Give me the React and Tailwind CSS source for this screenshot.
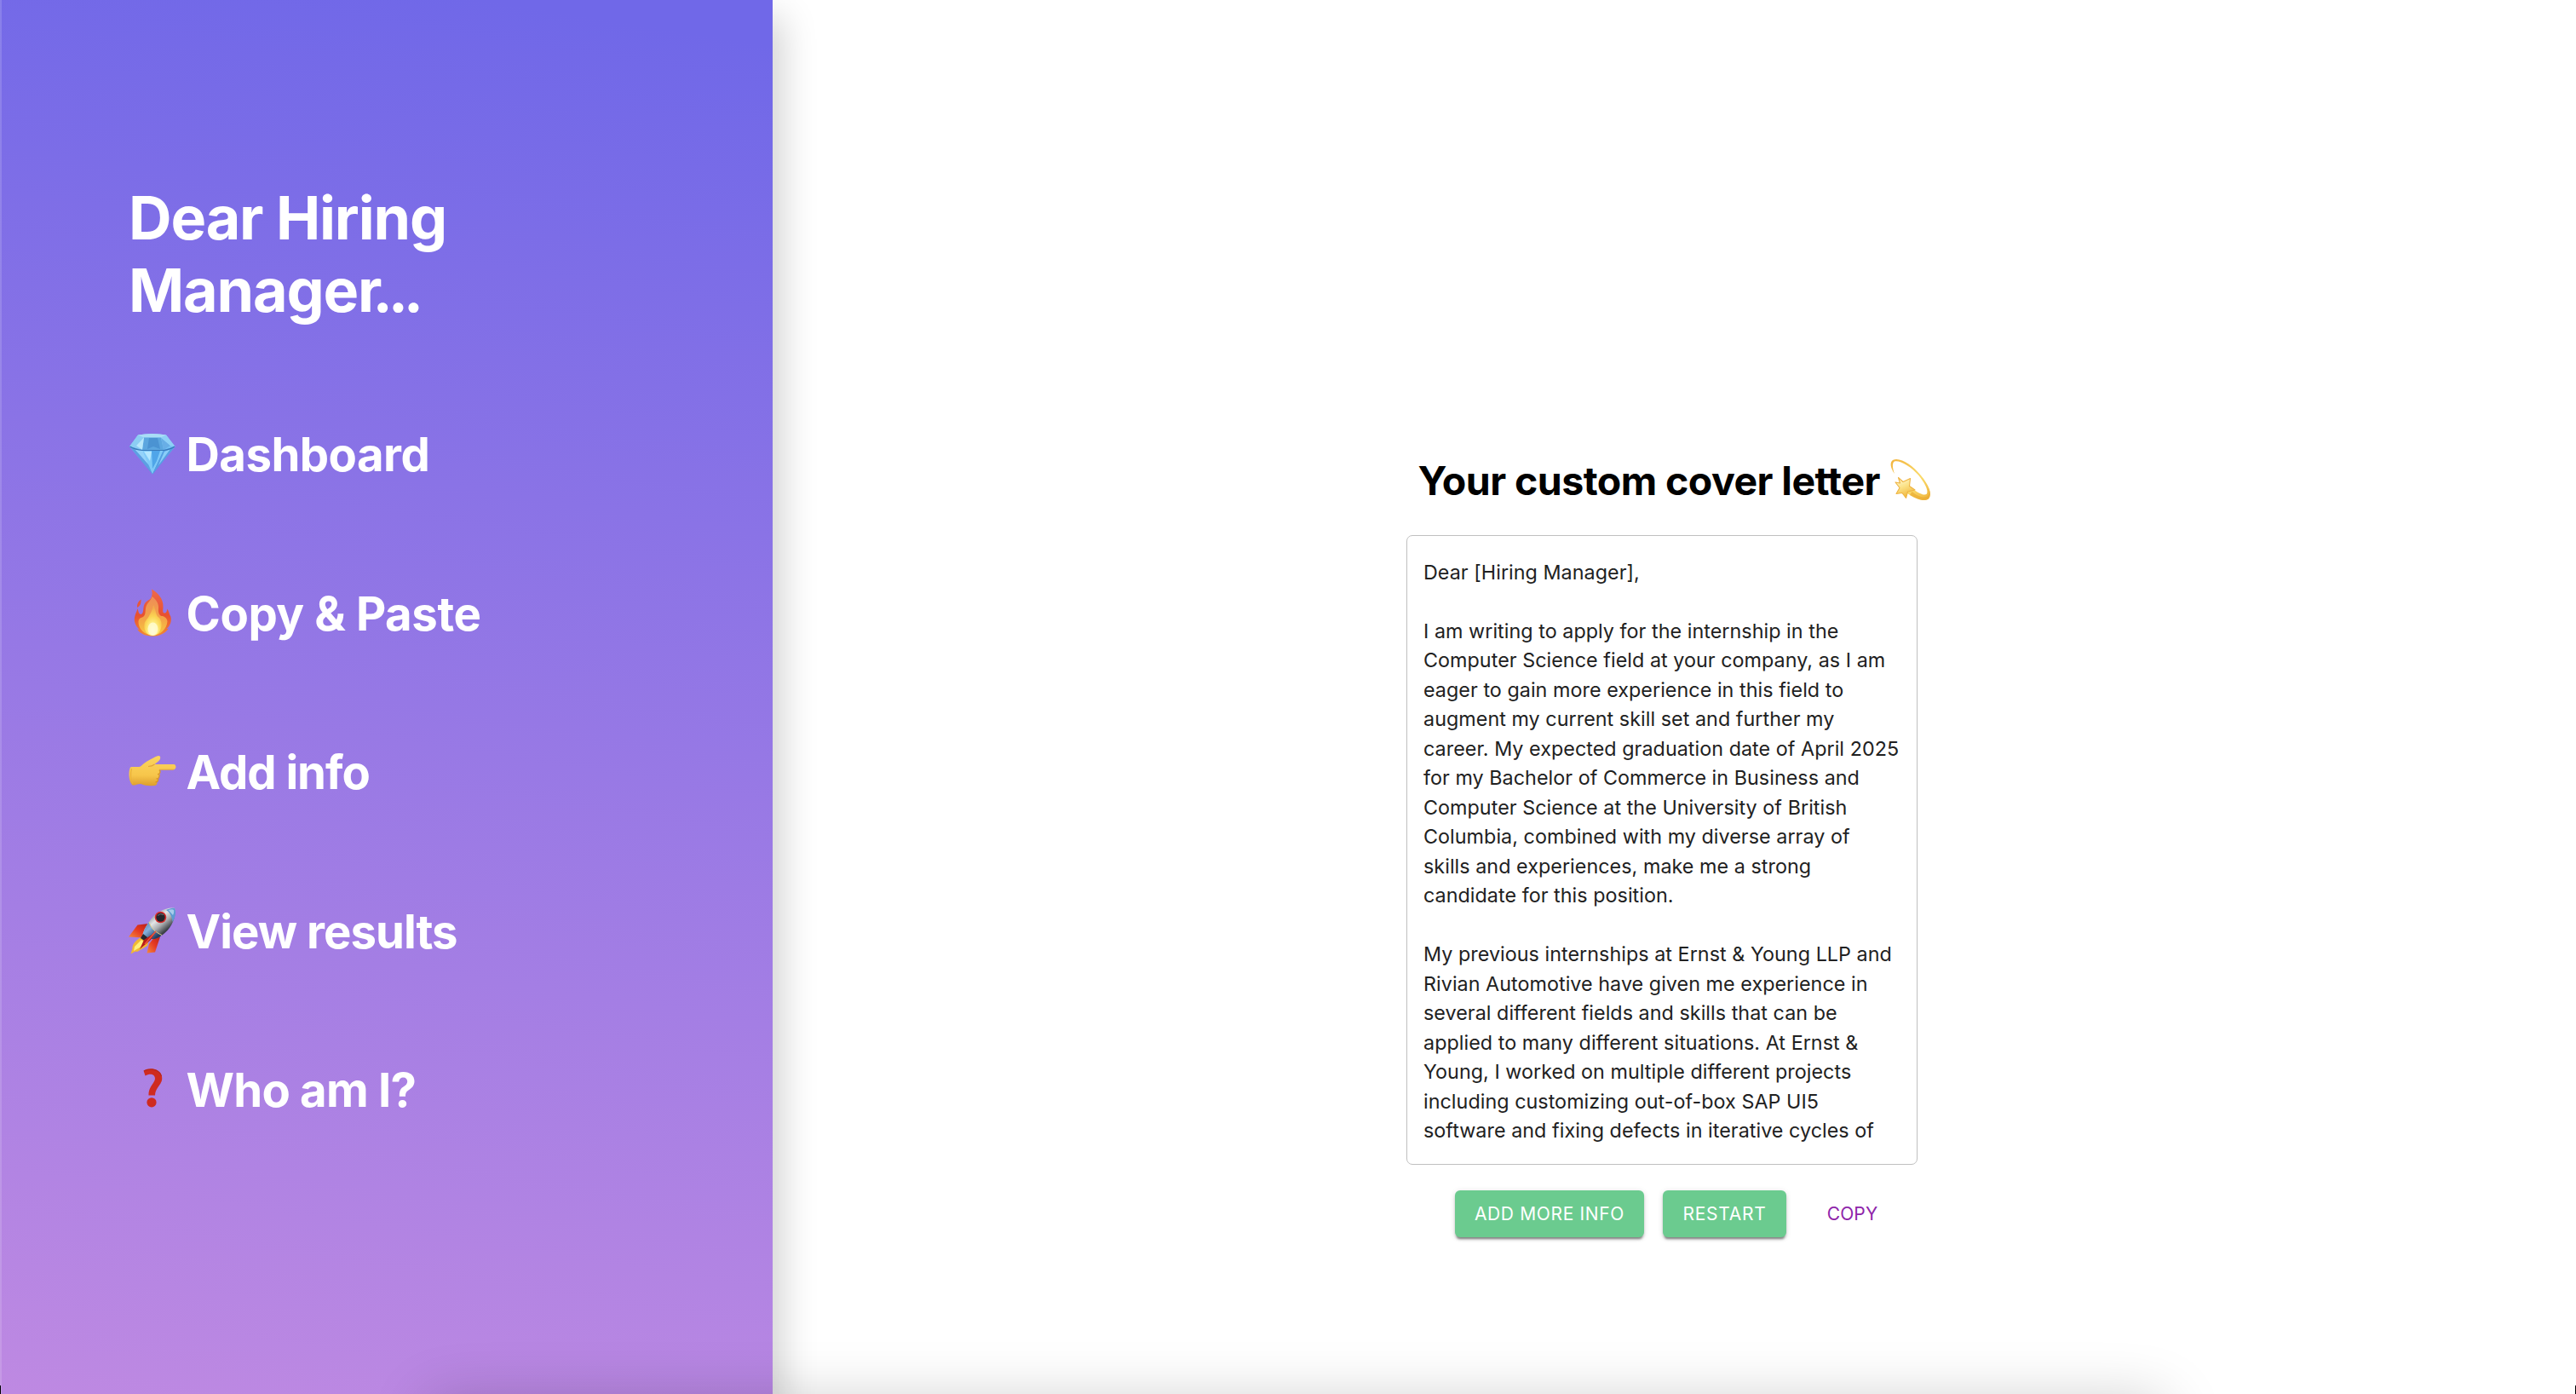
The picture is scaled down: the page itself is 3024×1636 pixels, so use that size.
function Gem() {
  return (
    <svg className="h-[66px] w-[56px] shrink-0" viewBox="0 0 56 66" aria-hidden="true">
      <defs>
        <linearGradient id="gemLow" x1="0" y1="0" x2="0" y2="1">
          <stop offset="0" stopColor="#9bdcfb" />
          <stop offset=".5" stopColor="#62b4f0" />
          <stop offset="1" stopColor="#3b86d6" />
        </linearGradient>
      </defs>
      <path d="M1 24 11 10.500Q28 7.500 44 10.500L54.500 24 28 56.500Z" fill="url(#gemLow)" />
      <path d="M1 24 11 10.500 18 13 9 23 16 28 1 24Z" fill="#8ccdf3" />
      <path d="M11 10.500Q28 7.500 44 10.500L38 13.500 18 13.500Z" fill="#a9ddf6" />
      <path d="M18 13.500H38L41 28H16Z" fill="#5ca6df" />
      <path d="M9 23 18 13.500 16 28Z" fill="#b9e7fb" />
      <path d="M38 13.500 41 28 49 23Z" fill="#68aee6" />
      <path d="M44 10.500 54.500 24 49 23 38 13.500Z" fill="#8fd0f6" />
      <path d="M24 14H34L37 27 29 24 22 27Z" fill="#4b93d2" />
      <path d="M1 24 16 28 28 56.500Z" fill="#5d9fe2" />
      <path d="M7 27 17 29 24 46Z" fill="#94d3fa" />
      <path d="M16 28H41L28 56.500Z" fill="#7fcaf8" />
      <path d="M27 29H37L33 41 28 50Z" fill="#4fa5e9" />
      <path d="M18 30 27 30 25 41Z" fill="#b4e7ff" />
      <path d="M41 28 54.500 24 28 56.500Z" fill="#559fe3" />
      <path d="M42 30 49 27 35 46Z" fill="#8acdf8" />
      <path d="M1.500 24Q8 28 16 28.500H41Q49 27.500 54 24" fill="none" stroke="#3678b8" strokeWidth="1.200" />
    </svg>
  );
}

function Fire() {
  return (
    <svg className="h-[66px] w-[56px] shrink-0" viewBox="0 0 56 66" aria-hidden="true">
      <defs>
        <linearGradient id="fireOut" x1="0" y1="0" x2="0" y2="1">
          <stop offset="0" stopColor="#ee6a4c" />
          <stop offset=".55" stopColor="#e8502f" />
          <stop offset="1" stopColor="#f08a35" />
        </linearGradient>
        <linearGradient id="fireMid" x1="0" y1="0" x2="0" y2="1">
          <stop offset="0" stopColor="#ee8d57" />
          <stop offset=".6" stopColor="#f3a547" />
          <stop offset="1" stopColor="#f8c83f" />
        </linearGradient>
        <radialGradient id="fireIn" cx=".5" cy=".85" r=".75">
          <stop offset="0" stopColor="#fffde2" />
          <stop offset=".3" stopColor="#fff48c" />
          <stop offset=".65" stopColor="#fbd453" />
          <stop offset="1" stopColor="#f4ab4c" />
        </radialGradient>
      </defs>
      <path d="M27 4.500C34 8 41 16 40.500 25 40.500 29 39.500 31 41.500 32.500 44 33 45.300 30.500 45 27.500 47.500 30 47.500 34 49.300 36.500 51 43 48 48 44.500 51 46 51 47 50.500 47 50.500 42.500 57 35 59.700 28.500 59.700 20 59.700 13.500 56.500 10 51.500L12.500 52C8 47 5.500 42 7.500 35.500 8.500 32 10 30 10.500 27 11.500 30 11.500 33 14 34 17 34 17 30 17.500 26 18 20 22 18 25.500 16 28 12 28 9 27 4.500Z" fill="url(#fireOut)" />
      <path d="M14.500 16.500C14.500 21 14 24 10 26 9.500 22 11 19 14.500 16.500Z" fill="#e5583c" />
      <path d="M27.500 13C33 17 35.500 22 35 27.500 34.500 33 37 36.500 40 36 43 37 45 39 45.500 42 45 51 37 58.500 28.500 58.500 19 58.500 11 51 11.500 42 12 39 14 38 16 37.500 20 36 19.500 31 20 27 21 20 26 19 27.500 13Z" fill="url(#fireMid)" />
      <path d="M29 23C32 28 31.500 34 34.500 37 37.500 39 39 43 38.500 48 37.500 55 33 59 28.500 59 22 59 17.500 53 18.500 46 19 41 22 40 24 36 26 32 28 29 29 23Z" fill="url(#fireIn)" />
      <ellipse cx="28.500" cy="51" rx="6" ry="7.500" fill="#fffbd5" opacity=".8" />
    </svg>
  );
}

function Pointing() {
  return (
    <svg className="h-[66px] w-[56px] shrink-0" viewBox="0 0 56 66" aria-hidden="true">
      <defs>
        <linearGradient id="handFill" x1="0" y1="0" x2="0" y2="1">
          <stop offset="0" stopColor="#fbd45f" />
          <stop offset=".65" stopColor="#f7c64b" />
          <stop offset="1" stopColor="#dd9e2e" />
        </linearGradient>
      </defs>
      <path d="M2 27.500C6 26 10 28 14 26.500 18 22 24 19 29 16.500 33 14 36 13 37 15 38 18 35.500 20.500 33 22L30.500 24H53C56 24 56.500 29.500 53 30.200L36.500 30.500C37.500 32 37.500 34.500 36 36 36.500 38 36 40 34.500 41 35 43 34 44 33 44.500 34.500 47.500 32 49 29.500 49 24 49.500 19 49 14.500 47 11 46.500 8 49 4.500 48.500 0 44 -.5 33 2 27.500Z" fill="url(#handFill)" />
      <path d="M36 30.500C38 33 37 35 34 36M36 36C36.500 39.500 35 41 32.500 41M34.500 41C35 43.500 34 44.500 31.500 45" fill="none" stroke="#d79428" strokeWidth="1.300" />
      <path d="M30.500 24C28 26 26 26.500 23 26.500" fill="none" stroke="#e0a238" strokeWidth="1.200" />
      <path d="M36 30.200H53" fill="none" stroke="#e2a83a" strokeWidth="1" />
      <path d="M3.500 29C2 35 2.500 42 5 47" fill="none" stroke="#e9b03d" strokeWidth="1.200" />
    </svg>
  );
}

function Rocket() {
  return (
    <svg className="h-[66px] w-[56px] shrink-0" viewBox="0 0 56 66" aria-hidden="true">
      <defs>
        <linearGradient id="rocketBody" x1=".3" y1=".2" x2=".75" y2=".7">
          <stop offset="0" stopColor="#8c969e" />
          <stop offset=".35" stopColor="#e3e6e6" />
          <stop offset=".65" stopColor="#a9adb0" />
          <stop offset="1" stopColor="#3b4046" />
        </linearGradient>
        <linearGradient id="rocketBlue" x1=".1" y1=".1" x2=".8" y2=".8">
          <stop offset="0" stopColor="#5b87b8" />
          <stop offset=".4" stopColor="#86b2dc" />
          <stop offset="1" stopColor="#223f63" />
        </linearGradient>
        <linearGradient id="rocketFin" x1="1" y1="0" x2="0" y2="1">
          <stop offset="0" stopColor="#b71f18" />
          <stop offset=".5" stopColor="#e63a22" />
          <stop offset="1" stopColor="#f48a3c" />
        </linearGradient>
      </defs>
      <path d="M23 24 10.500 25.500 0 39.500 17 40.500Z" fill="url(#rocketFin)" />
      <path d="M37 39.500 31 57.500 21.500 58.500 24 48 32 37Z" fill="url(#rocketFin)" />
      <path d="M15 40C8 43 4 49 4.500 53L2.500 59.500 8 56.500 10 57 22 50 24 42Z" fill="#f1b833" />
      <path d="M15 43 7 51 6 56 13 52 20 47Z" fill="#fff07a" />
      <path d="M24 22C31 11 43 4.500 54 5.700 57 15 50 30 40 37 36 40 31 42 27 42L16 39C17 33 20 27 24 22Z" fill="url(#rocketBody)" />
      <path d="M44 8C48 6 52 5.500 54 5.700 56.500 11 54 18 51.500 22 51 15 48 10 44 8Z" fill="#5c9bd2" />
      <path d="M46.500 8C50 7 52 7 53 8 53.500 10 53 12 52 14Z" fill="#a6cdea" />
      <path d="M24 22C26 29 31 34 39 37.500 35 41 30 42.500 27 42L16 39C17 33 20 27 24 22Z" fill="url(#rocketBlue)" />
      <path d="M24 22C26 29 31 34 39 37.500" fill="none" stroke="#e2d08b" strokeWidth="1" />
      <path d="M17 36 22 40 20 45 14 41Z" fill="#25282f" />
      <path d="M32.500 32 26 43 13 54 18 43 27 37Z" fill="#b81d19" />
      <path d="M32 33 25 41 19 48" fill="none" stroke="#f0553b" strokeWidth="1.400" />
      <circle cx="37.500" cy="16.500" r="6.800" fill="#d92b2b" />
      <circle cx="37.500" cy="16.500" r="5.200" fill="#22252b" />
      <path d="M34 14.500Q37 11.500 41 13.500" fill="none" stroke="#6d7278" strokeWidth="1" />
    </svg>
  );
}

function Question() {
  return (
    <svg className="h-[66px] w-[56px] shrink-0" viewBox="0 0 56 66" aria-hidden="true">
      <path d="M17.500 10.500C21 8.300 26 7.800 30 8.700 36 10 39.500 14 39.200 20 39 27 31.500 30 31 39.500H23.500C23 30 30.500 25 31 20 31 14.500 25 13.500 19.500 16.500Z" fill="#cf2b20" />
      <circle cx="27" cy="47.800" r="5.600" fill="#cf2b20" />
      <path d="M18 11C24 7.500 36 8 38.500 17" fill="none" stroke="#a8241b" strokeWidth=".8" />
    </svg>
  );
}

function Dizzy() {
  return (
    <svg className="h-[56px] w-[56px] shrink-0" viewBox="0 0 56 56" aria-hidden="true">
      <defs>
        <linearGradient id="dizzyRing" x1="0" y1="0" x2="1" y2="1">
          <stop offset="0" stopColor="#f2b43e" />
          <stop offset=".6" stopColor="#fadb6a" />
          <stop offset="1" stopColor="#eeb23a" />
        </linearGradient>
        <linearGradient id="dizzyStar" x1="0" y1="0" x2=".4" y2="1">
          <stop offset="0" stopColor="#fffbe3" />
          <stop offset=".5" stopColor="#fbe38a" />
          <stop offset="1" stopColor="#f2b93d" />
        </linearGradient>
      </defs>
      <path d="M8 20C3 13 2 6 6.500 3.700 15 .5 29 10 39 22 48 33 53 44 48 49.500 42 53.500 33 49.500 22 42.500L29 37.500C36 42.500 43 46.500 46 43.500 48 39 43 30 36 21.500 27 11 13.500 3.500 8 5.500 5 7 5.500 13 8 20Z" fill="url(#dizzyRing)" />
      <path d="M26 45C34 49.500 42 52.500 47.500 49.500 51 46 50 41 48 37 50 44 47 48 42 47.500 37 47 32 44 28.500 41Z" fill="#e9a92f" opacity=".65" />
      <path d="M12.500 24.500 18 29.500 26.500 25.500 25.500 34.500 32 39 23.500 41 21.500 48.500 17 42.500 10 43.500 14 36.500 9 30 14.500 31Z" fill="url(#dizzyStar)" stroke="#eeb341" strokeWidth="1.100" strokeLinejoin="round" />
    </svg>
  );
}

const navItems = [
  { icon: Gem, label: "Dashboard", tracking: "tracking-[-0.54px]" },
  { icon: Fire, label: "Copy & Paste", tracking: "tracking-[-0.42px]" },
  { icon: Pointing, label: "Add info", tracking: "tracking-[-1.04px]" },
  { icon: Rocket, label: "View results", tracking: "tracking-[-0.98px]" },
  { icon: Question, label: "Who am I?", tracking: "tracking-[-0.8px]" },
];

const letter = `Dear [Hiring Manager],

I am writing to apply for the internship in the
Computer Science field at your company, as I am
eager to gain more experience in this field to
augment my current skill set and further my
career. My expected graduation date of April 2025
for my Bachelor of Commerce in Business and
Computer Science at the University of British
Columbia, combined with my diverse array of
skills and experiences, make me a strong
candidate for this position.

My previous internships at Ernst & Young LLP and
Rivian Automotive have given me experience in
several different fields and skills that can be
applied to many different situations. At Ernst &
Young, I worked on multiple different projects
including customizing out-of-box SAP UI5
software and fixing defects in iterative cycles of`;

const raised =
  "h-[55px] rounded-[6px] bg-[#6bcb8f] text-white shadow-[0_4px_2px_-2px_rgba(0,0,0,0.3),0_3px_3px_rgba(0,0,0,0.18),0_1px_7px_rgba(0,0,0,0.12)]";

export default function App() {
  return (
    <div className="relative flex h-[1636px] w-[3024px] overflow-hidden bg-white font-['Inter',sans-serif]">
      <aside className="z-10 h-full w-[907px] shrink-0 border-l-2 border-white/15 bg-[linear-gradient(189deg,#7068e8_3%,#be89e2_100%)] bg-origin-border pt-[213px] pl-[149px] text-white shadow-[10px_20px_40px_rgba(0,0,0,0.19)]">
        <h1 className="text-[70px] leading-[85px] font-bold tracking-[-1.15px]">
          Dear Hiring
          <br />
          Manager<span className="-ml-[10px] tracking-[-5.2px]">...</span>
        </h1>
        <nav className="mt-[117px] flex flex-col gap-[120.500px]">
          {navItems.map(({ icon: Icon, label, tracking }) => (
            <a key={label} className="flex h-[66px] items-center gap-[11.500px]">
              <Icon />
              <span className={`text-[54.5px] leading-[66px] font-bold whitespace-nowrap ${tracking}`}>{label}</span>
            </a>
          ))}
        </nav>
      </aside>

      <main className="flex flex-1 flex-col pt-[536px] pl-[744px]">
        <h2 className="flex h-[56px] items-center gap-[9px] pl-[13.500px] text-[46.5px] leading-[56px] font-bold tracking-[-0.56px] whitespace-nowrap text-black">
          Your custom cover letter
          <Dizzy />
        </h2>
        <div className="mt-[36px] h-[739px] w-[600px] overflow-hidden rounded-[7px] border border-[#c0c0c0] pt-[25.500px] pl-[19px] text-[23.3px] leading-[34.5px] tracking-[0.05px] whitespace-pre text-[#212121]">
          {letter}
        </div>
        <div className="mt-[30px] flex pl-[57px] text-[21px] leading-[55px] font-normal">
          <button className={`${raised} w-[222px] tracking-[0.65px]`}>ADD MORE INFO</button>
          <button className={`${raised} ml-[22px] w-[145px] tracking-[0.7px]`}>RESTART</button>
          <button className="ml-[32px] h-[55px] w-[91px] tracking-[0.1px] text-[#8e24aa]">COPY</button>
        </div>
      </main>

      <div className="absolute top-[1646px] left-[505px] z-20 h-[60px] w-[2035px] shadow-[0_0_70px_rgba(0,0,0,0.22)]" />
      <div className="absolute bottom-0 left-0 z-20 h-[10px] w-px bg-black" />
      <div className="absolute right-0 bottom-0 z-20 h-[10px] w-px bg-black" />
    </div>
  );
}
